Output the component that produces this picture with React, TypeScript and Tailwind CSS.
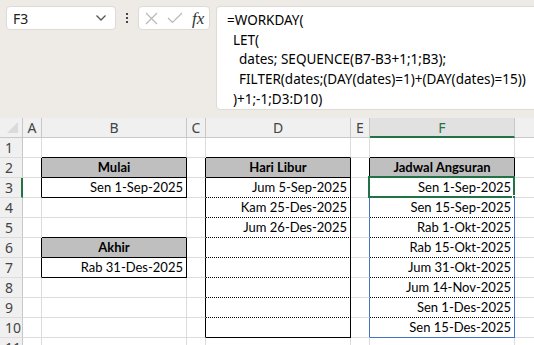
import React from "react";

const cols = [
  { key: "hdr", w: "w-[23px]" },
  { key: "A", w: "w-[19px]" },
  { key: "B", w: "w-[145px]" },
  { key: "C", w: "w-[19px]" },
  { key: "D", w: "w-[145px]" },
  { key: "E", w: "w-[19px]" },
  { key: "F", w: "w-[145px]" },
  { key: "G", w: "w-[60px]" },
];

const data: Record<string, string> = {
  B2: "Mulai",
  B3: "Sen 1-Sep-2025",
  B6: "Akhir",
  B7: "Rab 31-Des-2025",
  D2: "Hari Libur",
  D3: "Jum 5-Sep-2025",
  D4: "Kam 25-Des-2025",
  D5: "Jum 26-Des-2025",
  F2: "Jadwal Angsuran",
  F3: "Sen 1-Sep-2025",
  F4: "Sen 15-Sep-2025",
  F5: "Rab 1-Okt-2025",
  F6: "Rab 15-Okt-2025",
  F7: "Jum 31-Okt-2025",
  F8: "Jum 14-Nov-2025",
  F9: "Sen 1-Des-2025",
  F10: "Sen 15-Des-2025",
};

const headers = ["B2", "B6", "D2", "F2"];

// edge between column c and c+1
function rightEdge(r: number, c: number) {
  if ((c === 1 || c === 2) && [2, 3, 6, 7].includes(r)) return "border-r-black";
  if ((c === 3 || c === 4) && r >= 2 && r <= 10) return "border-r-black";
  if (c === 5 || c === 6) {
    if (r === 2) return "border-r-black";
    if (r >= 3 && r <= 10) return "border-r-[#4472c4]";
  }
  return "border-r-[#dcdcdc]";
}

// edge between row r and r+1
function bottomEdge(r: number, c: number) {
  if (c === 2 && [1, 2, 3, 5, 6, 7].includes(r)) return "border-b-black";
  if (c === 4) {
    if (r === 1 || r === 2 || r === 10) return "border-b-black";
    if (r >= 3 && r <= 9) return "border-b-black [border-bottom-style:dotted]";
  }
  if (c === 6) {
    if (r === 1 || r === 2) return "border-b-black";
    if (r >= 3 && r <= 9) return "border-b-black [border-bottom-style:dotted]";
    if (r === 10) return "border-b-[#4472c4]";
  }
  return "border-b-[#dcdcdc]";
}

function Cell({ r, c }: { r: number; c: number }) {
  const col = cols[c];
  const id = col.key + r;
  const text = data[id];
  const isHead = headers.includes(id);
  const selected = id === "F3";
  return (
    <div
      className={`relative box-border h-5 shrink-0 border-r border-b ${col.w} ${rightEdge(r, c)} ${bottomEdge(
        r,
        c
      )} ${isHead ? "bg-[#bfbfbf] text-center font-bold" : "bg-white text-right"} overflow-visible whitespace-nowrap px-[3px] leading-[19px] text-[13px] text-black`}
    >
      {text}
      {selected && (
        <>
          <div className="pointer-events-none absolute -top-[2px] -left-[2px] -right-[1px] -bottom-[1px] border-2 border-[#217346]" />
          <div className="absolute -right-[4px] -bottom-[4px] h-[6px] w-[6px] border border-white bg-[#217346]" />
        </>
      )}
    </div>
  );
}

function RowHeader({ r }: { r: number }) {
  return (
    <div
      className={`box-border h-5 w-[23px] shrink-0 border-b border-b-[#dcdcdc] bg-[#f0f0f0] pl-[5px] text-left leading-[19px] text-[14px] text-[#444] ${
        r === 3 ? "border-r-2 border-r-[#217346]" : "border-r border-r-[#c8c8c8]"
      }`}
      style={{ fontFamily: '"Noto Sans", sans-serif' }}
    >
      {r}
    </div>
  );
}

function ColumnHeaders() {
  return (
    <div className="flex h-5" style={{ fontFamily: '"Noto Sans", sans-serif' }}>
      <div className="box-border flex h-5 w-[23px] shrink-0 items-end justify-end border-r border-b border-r-[#c8c8c8] border-b-[#c8c8c8] bg-[#f0f0f0] pr-[4px] pb-[4px]">
        <svg width="11" height="11" viewBox="0 0 11 11">
          <polygon points="11,0 11,11 0,11" fill="#dadada" />
        </svg>
      </div>
      {cols.slice(1).map((col) =>
        col.key === "F" ? (
          <div
            key={col.key}
            className={`box-border h-5 shrink-0 border-r border-r-[#c8c8c8] border-b-2 border-b-[#217346] bg-[#e1e1e1] text-center leading-[19px] text-[14px] text-[#217346] ${col.w}`}
          >
            {col.key}
          </div>
        ) : (
          <div
            key={col.key}
            className={`box-border h-5 shrink-0 border-r border-b border-r-[#c8c8c8] border-b-[#c8c8c8] bg-[#f0f0f0] text-center leading-[19px] text-[14px] text-[#444] ${col.w}`}
          >
            {col.key === "G" ? "" : col.key}
          </div>
        )
      )}
    </div>
  );
}

function FormulaBar() {
  const lines: [string, string][] = [
    ["pl-0", "=WORKDAY("],
    ["pl-[6px]", "LET("],
    ["pl-[12px]", "dates; SEQUENCE(B7-B3+1;1;B3);"],
    ["pl-[12px]", "FILTER(dates;(DAY(dates)=1)+(DAY(dates)=15))"],
    ["pl-[6px]", ")+1;-1;D3:D10)"],
  ];
  return (
    <div
      className="flex h-[118px] items-start bg-[#eeeae5] pt-[6px] pl-[6px]"
      style={{ fontFamily: '"Noto Sans", sans-serif' }}
    >
      <div className="box-border flex h-6 w-[110px] shrink-0 items-center justify-between rounded-[4px] border border-[#dedad5] bg-white pl-[6px] pr-[8px] text-[14px] text-[#222]">
        <span>F3</span>
        <svg width="12" height="8" viewBox="0 0 12 8" fill="none" stroke="#555" strokeWidth="1.3">
          <path d="M1.5 1.5 L6 6 L10.5 1.5" />
        </svg>
      </div>
      <div className="flex h-6 w-[22px] shrink-0 flex-col items-center justify-center gap-[2px]">
        <div className="h-[2px] w-[2px] bg-[#444]" />
        <div className="h-[2px] w-[2px] bg-[#444]" />
        <div className="h-[2px] w-[2px] bg-[#444]" />
      </div>
      <div className="box-border flex h-6 w-[72px] shrink-0 items-center rounded-[4px] border border-[#dedad5] bg-white pl-[6px]">
        <svg width="13" height="13" viewBox="0 0 13 13" stroke="#b8b8b8" strokeWidth="1.2">
          <path d="M1 1 L12 12 M12 1 L1 12" />
        </svg>
        <svg className="ml-[9px]" width="16" height="12" viewBox="0 0 16 12" fill="none" stroke="#b8b8b8" strokeWidth="1.2">
          <path d="M1 6 L5.5 10.5 L15 1" />
        </svg>
        <span
          className="ml-[9px] text-[17px] italic leading-none text-[#333]"
          style={{ fontFamily: '"Liberation Serif", serif' }}
        >
          fx
        </span>
      </div>
      <div className="ml-[6px] box-border h-[104px] w-[340px] shrink-0 rounded-[4px] border border-[#dedad5] bg-white pt-[4px] pl-[10px] text-[13.5px] leading-[19.7px] text-black">
        {lines.map(([pad, t], i) => (
          <div key={i} className={`whitespace-pre ${pad}`}>
            {t}
          </div>
        ))}
      </div>
    </div>
  );
}

export default function App() {
  const rows = Array.from({ length: 11 }, (_, i) => i + 1);
  return (
    <div className="h-[345px] w-[534px] overflow-hidden bg-white">
      <FormulaBar />
      <ColumnHeaders />
      <div style={{ fontFamily: 'Lato, "Noto Sans", sans-serif' }}>
        {rows.map((r) => (
          <div key={r} className="flex">
            <RowHeader r={r} />
            {cols.slice(1).map((_, i) => (
              <Cell key={i} r={r} c={i + 1} />
            ))}
          </div>
        ))}
      </div>
    </div>
  );
}
